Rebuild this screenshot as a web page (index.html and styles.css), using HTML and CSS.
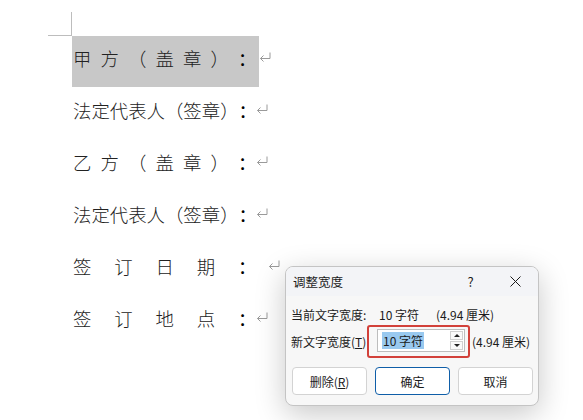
FILE: index.html
```html
<!DOCTYPE html>
<html lang="zh-CN">
<head>
    <meta charset="UTF-8">
    <meta name="viewport" content="width=device-width, initial-scale=1.0">
    <title>调整宽度</title>
    <link rel="stylesheet" href="styles.css">
</head>
<body>
    <div class="page">
        <!-- Page corner mark -->
        <div class="corner"></div>

        <!-- Document body -->
        <div class="doc">
            <div class="row">
                <span class="txt hl"><span class="sp-a">甲方（盖章）</span><span class="colon">：</span></span>
                <svg class="para" width="12" height="10" viewBox="0 0 12 10"><path d="M11 0.5V6.5H1.5M4.5 3.5L1.5 6.5L4.5 9.5" fill="none" stroke="#9a9a9a" stroke-width="1"/></svg>
            </div>
            <div class="row">
                <span class="txt">法定代表人（签章）<span class="colon">：</span></span>
                <svg class="para" width="12" height="10" viewBox="0 0 12 10"><path d="M11 0.5V6.5H1.5M4.5 3.5L1.5 6.5L4.5 9.5" fill="none" stroke="#9a9a9a" stroke-width="1"/></svg>
            </div>
            <div class="row">
                <span class="txt"><span class="sp-a">乙方（盖章）</span><span class="colon">：</span></span>
                <svg class="para" width="12" height="10" viewBox="0 0 12 10"><path d="M11 0.5V6.5H1.5M4.5 3.5L1.5 6.5L4.5 9.5" fill="none" stroke="#9a9a9a" stroke-width="1"/></svg>
            </div>
            <div class="row">
                <span class="txt">法定代表人（签章）<span class="colon">：</span></span>
                <svg class="para" width="12" height="10" viewBox="0 0 12 10"><path d="M11 0.5V6.5H1.5M4.5 3.5L1.5 6.5L4.5 9.5" fill="none" stroke="#9a9a9a" stroke-width="1"/></svg>
            </div>
            <div class="row">
                <span class="txt wide"><span class="sp-b">签订日期</span><span class="colon">：</span></span>
                <svg class="para" width="12" height="10" viewBox="0 0 12 10"><path d="M11 0.5V6.5H1.5M4.5 3.5L1.5 6.5L4.5 9.5" fill="none" stroke="#9a9a9a" stroke-width="1"/></svg>
            </div>
            <div class="row">
                <span class="txt"><span class="sp-b">签订地点</span><span class="colon">：</span></span>
                <svg class="para" width="12" height="10" viewBox="0 0 12 10"><path d="M11 0.5V6.5H1.5M4.5 3.5L1.5 6.5L4.5 9.5" fill="none" stroke="#9a9a9a" stroke-width="1"/></svg>
            </div>
        </div>

        <!-- Dialog -->
        <div class="dialog">
            <div class="dlg-title">
                <span class="dlg-caption">调整宽度</span>
                <span class="dlg-ctrl">?</span>
                <span class="dlg-ctrl">
                    <svg width="11" height="11" viewBox="0 0 11 11"><path d="M0.5 0.5L10.5 10.5M10.5 0.5L0.5 10.5" stroke="#1b1b1b" stroke-width="1"/></svg>
                </span>
            </div>
            <div class="dlg-body">
                <div class="dlg-line">
                    <span class="lbl-cur">当前文字宽度:</span>
                    <span class="val">10 字符</span>
                    <span>(4.94 厘米)</span>
                </div>
                <div class="dlg-line dlg-edit">
                    <span class="lbl-new">新文字宽度(<u>T</u>)</span>
                    <div class="mark">
                        <div class="spin">
                            <span class="sel">10 字符</span>
                            <div class="spin-btns">
                                <span class="spin-up"></span>
                                <span class="spin-down"></span>
                            </div>
                        </div>
                    </div>
                    <span class="after">(4.94 厘米)</span>
                </div>
                <div class="dlg-buttons">
                    <button class="btn">删除(<u>R</u>)</button>
                    <button class="btn primary">确定</button>
                    <button class="btn">取消</button>
                </div>
            </div>
        </div>
    </div>
</body>
</html>
```

FILE: styles.css
```css
/* Global */
body {
    margin: 0;
    background-color: #ffffff;
    font-family: "Noto Sans CJK SC", sans-serif;
}

.page {
    position: relative;
    width: 583px;
    height: 420px;
    overflow: hidden;
}

/* Corner mark */
.corner {
    width: 23px;
    height: 23px;
    margin-left: 48px;
    margin-top: 12px;
    border-right: 1px solid #bdbdbd;
    border-bottom: 1px solid #bdbdbd;
}

/* Document text */
.doc {
    padding-left: 72px;
    font-size: 18.4px;
    font-weight: 300;
    color: #222222;
    text-spacing-trim: space-all;
}

.row {
    display: flex;
    height: 52px;
}

.txt {
    box-sizing: border-box;
    width: 184px;
    height: 51px;
    padding-left: 1px;
    line-height: 44px;
    white-space: nowrap;
}

.txt.wide {
    width: 196px;
}

.hl {
    width: 187px;
    background-color: #c8c8c8;
}

.sp-a {
    letter-spacing: 9.1px;
}

.sp-b {
    letter-spacing: 22.85px;
}

.colon {
    font-family: "Noto Sans CJK TC", sans-serif;
    font-weight: 400;
    color: #000000;
}

.para {
    margin-top: 16px;
}

/* Dialog */
.dialog {
    position: absolute;
    left: 285px;
    top: 266px;
    width: 254px;
    height: 140px;
    box-sizing: border-box;
    border: 1px solid #c4c4c4;
    border-radius: 8px;
    background-color: #f7f7f7;
    box-shadow: 0 8px 30px rgba(0, 0, 0, 0.22);
    font-size: 12px;
    color: #1b1b1b;
    overflow: hidden;
}

.dlg-title {
    display: flex;
    align-items: center;
    height: 29px;
    padding-left: 7px;
    background-color: #f3f4f7;
}

.dlg-caption {
    flex: 1;
    font-size: 12.5px;
}

.dlg-ctrl {
    display: flex;
    align-items: center;
    justify-content: center;
    width: 45px;
    height: 29px;
    font-size: 13px;
}

.dlg-body {
    padding: 10px 5px 0 5px;
}

.dlg-line {
    display: flex;
    align-items: center;
    height: 16px;
    white-space: nowrap;
}

.lbl-cur {
    width: 88px;
}

.val {
    width: 57px;
}

.dlg-edit {
    height: 33px;
    margin-top: 3px;
}

.lbl-new {
    width: 76px;
}

.mark {
    box-sizing: border-box;
    width: 103px;
    height: 33px;
    padding: 2px 3px 6px 8px;
    border: 2px solid #d2413a;
    border-radius: 3px;
}

.spin {
    display: flex;
    align-items: center;
    height: 23px;
    box-sizing: border-box;
    border: 1px solid #bdbdbd;
    background-color: #ffffff;
    padding-left: 4px;
}

.sel {
    flex: none;
    background-color: #99c9ef;
    line-height: 17px;
    padding: 0 1px;
}

.spin-btns {
    display: flex;
    flex-direction: column;
    margin-left: auto;
    margin-right: 1px;
    gap: 1px;
}

.spin-up,
.spin-down {
    position: relative;
    width: 13px;
    height: 9px;
    border: 1px solid #d0d0d0;
    box-sizing: border-box;
    background-color: #fafafa;
}

.spin-up::after,
.spin-down::after {
    content: "";
    position: absolute;
    left: 3px;
    top: 2px;
    border-left: 3px solid transparent;
    border-right: 3px solid transparent;
}

.spin-up::after {
    border-bottom: 3px solid #222;
}

.spin-down::after {
    border-top: 3px solid #222;
}

.after {
    margin-left: 2px;
}

.dlg-buttons {
    display: flex;
    gap: 8px;
    margin-top: 9px;
    padding-left: 1px;
}

.btn {
    width: 75px;
    height: 28px;
    padding: 0;
    border: 1px solid #d3d3d3;
    border-radius: 4px;
    background-color: #ffffff;
    font-family: "Noto Sans CJK SC", sans-serif;
    font-size: 12px;
    color: #1b1b1b;
}

.btn.primary {
    border-color: #0f5ea8;
}
```
